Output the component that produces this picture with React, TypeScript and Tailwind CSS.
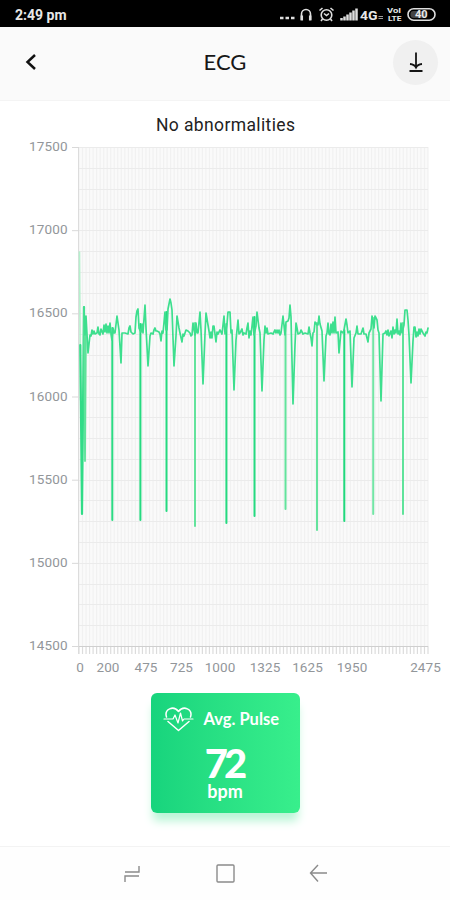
import React from 'react';

const yLabels = [17500, 17000, 16500, 16000, 15500, 15000, 14500];

const xLabels = [
  { value: 0, x: 80 },
  { value: 200, x: 108 },
  { value: 475, x: 146 },
  { value: 725, x: 181.5 },
  { value: 1000, x: 220 },
  { value: 1325, x: 265 },
  { value: 1625, x: 307.5 },
  { value: 1950, x: 352 },
  { value: 2475, x: 425.5 },
];

const PLOT = { left: 79, right: 428, top: 46.5, bottom: 545.5 };
const columns = Array.from({ length: 100 }, (_, i) => PLOT.left + (i * (PLOT.right - PLOT.left)) / 99);
const rows = Array.from({ length: 24 }, (_, i) => Math.floor(PLOT.top + (i * (PLOT.bottom - PLOT.top)) / 24) + 0.5);

const trace =
  '84,307 85,335 86,316 88,353 90,335 91,336 92,330 93,334 94,331 95,334 97,333 98,327 99,334 100,335 101,329 103,334 104,325 105,332 106,324 107,333 108,326 109,333 110,323 111,334 112,340 113,328 114,333 115,333 117,316 119,330 121,363 122,333 125,333 128,334 129,328 130,326 131,332 133,334 135,333 136,317 137,311 138,309 139,328 141,332 142,324 143,333 145,305 146,328 148,366 150,336 151,333 153,334 154,330 155,328 156,331 157,331 159,332 160,334 161,341 162,331 163,333 165,312 166,330 167,330 168,309 170,299 171,303 172,310 174,366 176,336 177,316 179,328 180,333 182,342 183,334 184,336 186,330 188,331 190,333 191,336 192,335 193,323 195,335 196,323 197,333 198,333 200,312 201,330 203,384 205,334 206,313 208,325 209,331 210,338 211,332 212,338 213,326 214,326 216,342 217,332 218,334 220,330 222,334 224,316 225,334 226,330 227,324 228,312 230,312 231,333 232,330 234,390 236,340 238,320 239,334 240,333 242,329 243,335 244,333 246,334 247,328 248,323 249,338 250,331 251,335 253,317 254,335 256,326 257,312 259,328 260,333 262,391 264,340 265,326 266,333 267,328 268,334 271,333 273,334 275,330 276,333 277,330 278,333 279,330 280,335 281,333 283,316 285,335 286,322 288,321 289,318 290,305 291,317 293,404 295,345 296,323 297,328 298,334 300,333 301,330 303,334 305,333 308,334 309,327 310,333 311,338 312,346 313,333 314,332 315,322 317,325 318,325 319,316 320,324 322,331 324,381 326,336 327,333 328,323 329,334 330,335 331,324 332,333 333,322 334,333 335,317 336,333 338,332 339,353 341,331 343,333 344,330 346,319 347,325 348,333 350,331 352,387 354,338 356,333 357,326 358,334 361,334 363,328 364,334 366,334 368,342 369,333 371,329 372,316 374,328 375,316 377,320 378,330 379,333 381,401 383,334 385,333 386,331 387,335 388,330 389,336 391,331 392,338 393,327 394,334 395,330 396,333 397,319 398,334 399,331 400,335 401,323 402,333 404,325 405,310 407,310 408,320 409,335 411,383 413,341 414,327 415,327 416,337 417,332 418,336 419,329 420,334 421,329 423,333 425,336 426,332 427,333 428,328';

// the long downward R spikes, some of them drawn paler
const spikes = [
  { x: 112.3, top: 328, bottom: 520, color: '#2cdb84' },
  { x: 140.4, top: 324, bottom: 520, color: '#25da80' },
  { x: 166.5, top: 312, bottom: 511, color: '#25da80' },
  { x: 195, top: 323, bottom: 526, color: '#63e39c' },
  { x: 226.4, top: 324, bottom: 523, color: '#25da80' },
  { x: 254.5, top: 317, bottom: 516, color: '#25da80' },
  { x: 285.5, top: 325, bottom: 509, color: '#63e39c' },
  { x: 317, top: 323, bottom: 530, color: '#63e39c' },
  { x: 344.3, top: 330, bottom: 521, color: '#20d97d' },
  { x: 373.2, top: 318, bottom: 514, color: '#72e6a5' },
  { x: 403, top: 323, bottom: 514, color: '#5fe39a' },
];

function StatusBar() {
  return (
    <div className="flex h-[27px] items-center justify-between bg-black pt-[3px] pr-[14px] pl-[15px] text-[#e8e8e8]">
      <span className="font-[Roboto] text-[14px] leading-none font-bold">2:49 pm</span>
      <svg width="157" height="20" viewBox="279 5 157 20" fill="none" stroke="#dedede" strokeWidth="1.6">
        <path d="M280 18h3.500M285.500 18h3.500M291 18h3.500" strokeWidth="2.600" />
        <path d="M301.500 20v-6a4.500 4.500 0 0 1 9 0v6" />
        <path d="M301.800 15.500v5M310.200 15.500v5" strokeWidth="2.500" />
        <circle cx="326.500" cy="15" r="5.300" />
        <path d="M319.500 10.500l3-2.500M333.500 10.500l-3-2.500M324 13.500l2.500 2 2.500-2M322.500 19l-1.500 2M330.500 19l1.500 2" />
        <path
          d="M341.500 20.500v-2.500M344.500 20.500v-4M347.500 20.500v-6M350.500 20.500v-8M353.500 20.500v-10M356.500 20.500v-12"
          strokeWidth="2.500"
        />
        <path d="M378.500 16.500h4.500M378.500 18.500h4.500" strokeWidth="1.200" opacity=".7" />
        <rect x="408" y="8.700" width="27" height="11.500" rx="5.700" />
        <rect x="410.500" y="11" width="16" height="7" rx="3" fill="#444" stroke="none" />
        <g fill="#e8e8e8" stroke="none" fontFamily="Roboto, sans-serif" fontWeight="700">
          <text x="360" y="19.500" fontSize="13.500" textLength="17.500" lengthAdjust="spacingAndGlyphs">4G</text>
          <text x="387" y="13" fontSize="7" textLength="14" lengthAdjust="spacingAndGlyphs">VoI</text>
          <text x="388" y="21" fontSize="8" textLength="13.500" lengthAdjust="spacingAndGlyphs">LTE</text>
          <text x="415" y="18.300" fontSize="11">40</text>
        </g>
      </svg>
    </div>
  );
}

function Header() {
  return (
    <header className="grid h-[74px] grid-cols-[1fr_auto_1fr] items-center border-b border-[#f4f4f4] bg-[#fafafa] px-[12px] pb-[3px]">
      <svg className="ml-[13px]" width="12" height="18" viewBox="0 0 12 18" fill="none" stroke="#111" strokeWidth="2.500">
        <path d="M10 2L2.500 9l7.500 7" />
      </svg>
      <h1 className="font-[Lato] text-[22px] leading-none text-[#171717]">ECG</h1>
      <button className="flex size-[45px] items-center justify-center justify-self-end rounded-full bg-[#f0f0f0]">
        <svg width="16" height="22" viewBox="0 0 16 22" fill="none" stroke="#151515" strokeWidth="1.800">
          <path d="M8 1.500v15M2 13q4.500.4 6 3.500 1.500-3.100 6-3.500M1.500 20h13" />
        </svg>
      </button>
    </header>
  );
}

function EcgChart() {
  return (
    <section className="h-[585px]">
      <svg width="450" height="585" viewBox="0 0 450 585" className="block">
        <text x="225.500" y="30" fill="#222" fontFamily="Roboto, sans-serif" fontSize="17.500" textAnchor="middle" textLength="139">
          No abnormalities
        </text>
        <rect x="79" y="46" width="349" height="499" fill="#fafafa" />
        {columns.map((x, i) => (
          <g key={i}>
            <path d={`M${x} 46V545`} stroke="#f1f1f1" strokeWidth="1.200" />
            <path d={`M${x} 545v8`} stroke="#dcdcdc" strokeWidth="1.200" />
          </g>
        ))}
        {rows.map((y) => (
          <path key={y} d={`M79 ${y}H428`} stroke="#ebebeb" />
        ))}
        <path d="M78.500 46V553" stroke="#dcdcdc" />
        <path d="M72 545.500H428" stroke="#cfcfcf" />
        <g fontFamily="Roboto, sans-serif" fontSize="13.500" fill="#92969a">
          {yLabels.map((value, i) => (
            <g key={value}>
              <text x="67.500" y={50 + i * 83.2} textAnchor="end" textLength="38.500">{value}</text>
              <path d={`M72 ${46.5 + i * 83.17}h7`} stroke="#d9d9d9" />
            </g>
          ))}
          {xLabels.map(({ value, x }) => (
            <text key={value} x={x} y="571" textAnchor="middle" letterSpacing=".1">{value}</text>
          ))}
        </g>
        <g transform="translate(0 -101)" fill="none" strokeLinejoin="round" strokeLinecap="round">
          <path d="M79.500 252L80.500 400" stroke="#b5f0cd" strokeWidth="1.600" />
          <path d="M80.300 345L82 514L84 307" stroke="#30dc87" strokeWidth="2.200" />
          <path d="M84 307L85 461L86 320" stroke="#5ee29a" strokeWidth="1.800" />
          {spikes.map(({ x, top, bottom, color }) => (
            <path key={x} d={`M${x} ${top}V${bottom}`} stroke={color} strokeWidth="2" />
          ))}
          <polyline points={trace} stroke="#3ddf8e" strokeWidth="1.700" />
        </g>
      </svg>
    </section>
  );
}

function PulseCard() {
  return (
    <div className="mx-auto mt-[7px] h-[120px] w-[149px] rounded-[6px] bg-linear-to-r from-[#17d47d] to-[#38ef8c] text-white shadow-[0_10px_10px_-2px_#b9f5d6]">
      <div className="flex items-center gap-[10px] pt-[13px] pl-[12px]">
        <svg width="31" height="26" viewBox="0 0 31 26" fill="none" stroke="white" strokeWidth="1.500" strokeLinejoin="round" strokeLinecap="round">
          <path d="M3.500 11C1 3 10.500-1 15.500 5.500 20.500-1 30 3 27.500 11M5 15.500l10.500 9 10.500-9" />
          <path d="M1 13h9l2-4 3 8 2.500-10 2 8 1.500-2h9" strokeWidth="1.200" />
        </svg>
        <span className="font-[Lato] text-[16.500px] leading-none font-bold whitespace-nowrap">Avg. Pulse</span>
      </div>
      <p className="mt-[13px] pr-[2px] text-center font-[Lato] text-[40px] leading-[36px] font-black tracking-[-4px]">72</p>
      <p className="mt-[-1px] text-center font-[Lato] text-[18px] leading-[22px] font-bold">bpm</p>
    </div>
  );
}

function NavBar() {
  return (
    <nav className="mt-auto flex h-[54px] items-center justify-between border-t border-[#f3f3f3] bg-[#fefefe] pr-[122px] pl-[123px]">
      <svg width="18" height="18" viewBox="0 0 18 18" fill="none" stroke="#8b8b8b" strokeWidth="1.400">
        <path d="M2 7h14V1M16 11H2v6" />
      </svg>
      <svg width="19" height="19" viewBox="0 0 19 19" fill="none" stroke="#8b8b8b" strokeWidth="1.400">
        <rect x="1" y="1" width="17" height="17" rx="1" />
      </svg>
      <svg width="19" height="19" viewBox="0 0 19 19" fill="none" stroke="#8b8b8b" strokeWidth="1.400">
        <path d="M18 9H2M9 1L1.500 9 9 17.500" />
      </svg>
    </nav>
  );
}

export default function App() {
  return (
    <main className="flex h-[900px] w-[450px] flex-col overflow-hidden bg-white font-[Roboto]">
      <StatusBar />
      <Header />
      <EcgChart />
      <PulseCard />
      <NavBar />
    </main>
  );
}
